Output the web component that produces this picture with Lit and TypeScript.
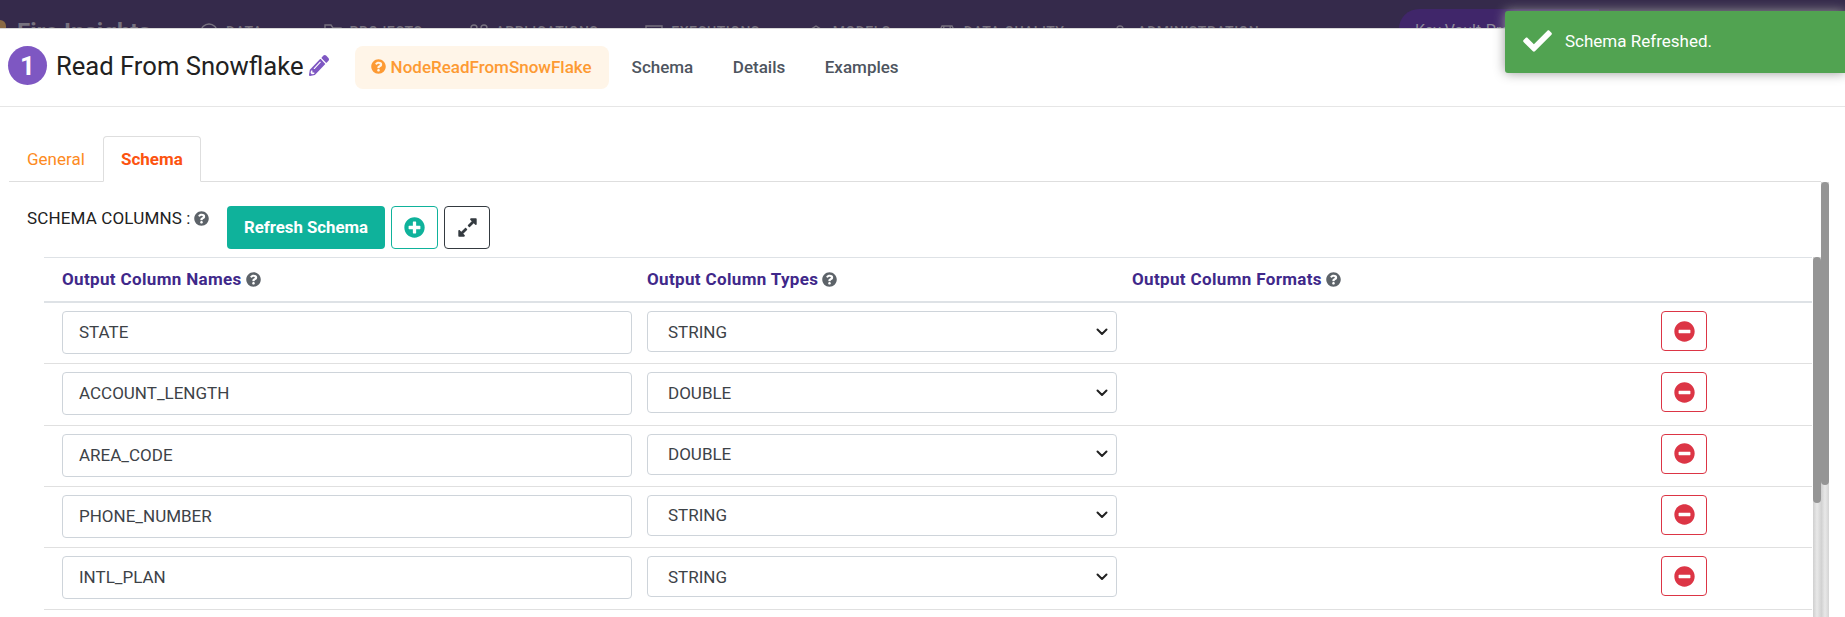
import { LitElement, html, css } from "lit";
import { customElement } from "lit/decorators.js";

const faQuestion = (cls: string) => html`<svg class=${cls} viewBox="0 0 512 512" fill="currentColor"><path fill-rule="evenodd" d="M504 256c0 137-111 248-248 248S8 393 8 256 119 8 256 8s248 111 248 248zM262.700 90c-54.500 0-89.300 23-116.500 63.800-3.500 5.300-2.400 12.400 2.700 16.300l34.700 26.300c5.200 3.900 12.600 3 16.700-2.100 17.900-22.700 30.100-35.800 57.300-35.800 20.400 0 45.700 13.100 45.700 32.900 0 15-12.400 22.700-32.500 34-23.500 13.200-54.600 29.600-54.600 70.700v6c0 6.600 5.400 12 12 12h56c6.600 0 12-5.400 12-12v-3.300c0-28.500 83.200-29.700 83.200-106.700C395.400 134 335.200 90 262.700 90zM256 338c-25.400 0-46 20.600-46 46s20.600 46 46 46 46-20.600 46-46-20.600-46-46-46z"/></svg>`;

const minusCircle = html`<svg class="ic-minus" viewBox="0 0 512 512" fill="currentColor"><path d="M256 8C119 8 8 119 8 256s111 248 248 248 248-111 248-248S393 8 256 8zM124 296c-6.600 0-12-5.400-12-12v-56c0-6.600 5.400-12 12-12h264c6.600 0 12 5.400 12 12v56c0 6.600-5.400 12-12 12H124z"/></svg>`;

const rows = [
  ["STATE", "STRING"],
  ["ACCOUNT_LENGTH", "DOUBLE"],
  ["AREA_CODE", "DOUBLE"],
  ["PHONE_NUMBER", "STRING"],
  ["INTL_PLAN", "STRING"],
];

const navIcon = (d: string) => html`<svg class="nav-ic" viewBox="0 0 18 18" fill="none" stroke="currentColor" stroke-width="1.4"><path d=${d}/></svg>`;

const navItems: [string, string][] = [
  ["DATA", "M1 9a8 8 0 1 0 16 0a8 8 0 1 0-16 0"],
  ["PROJECTS", "M1 16V2h6l2 3h8v11z"],
  ["APPLICATIONS", "M1 5a3 3 0 1 0 6 0a3 3 0 1 0-6 0M11 5a3 3 0 1 0 6 0a3 3 0 1 0-6 0M2 12h14v5H2z"],
  ["EXECUTIONS", "M1 3h16v12H1zM7 6l5 3-5 3z"],
  ["MODELS", "M9 3l8 5v8H1V8z"],
  ["DATA QUALITY", "M4 3h10l3 6H1zM6 3l-1 6M12 3l1 6M4 9v8M14 9v8"],
  ["ADMINISTRATION", "M6 6a3 3 0 1 0 6 0a3 3 0 1 0-6 0M3 17a6 6 0 0 1 12 0"],
];

@customElement("app-root")
export class AppRoot extends LitElement {
  static styles = css`
    :host { display: block; width: 1845px; height: 617px; overflow: hidden; position: relative; background: #fff; font-family: Roboto, "Liberation Sans", sans-serif; color: #212529; }
    .topbar { height: 28px; background: #352a4b; display: flex; align-items: flex-start; overflow: hidden; }
    .logo { width: 6px; height: 8px; margin-top: 20px; background: #8a6a45; border-radius: 0 8px 0 0; flex: none; }
    .brand { color: #77727f; font-size: 24px; line-height: 28px; font-weight: 700; margin: 18px 0 0 11px; width: 183px; flex: none; white-space: nowrap; }
    .topnav { display: flex; gap: 47px; flex: none; margin-top: 24px; color: #77727f; font-size: 14px; line-height: 16px; font-weight: 500; letter-spacing: .5px; }
    .topnav > div { display: flex; align-items: flex-start; gap: 8px; white-space: nowrap; }
    .topnav > div:first-child { margin-right: 14px; }
    .nav-ic { width: 18px; height: 18px; flex: none; margin-top: -1px; }
    .vault { margin: 9px 246px 0 auto; width: 200px; height: 40px; flex: none; border-radius: 20px 0 0 20px; background: #40266a; color: #8d8a9a; font-size: 16px; padding: 12px 0 0 16px; box-sizing: border-box; white-space: nowrap; }
    .sheet { background: #fff; border-top: 1px solid #d8d8d8; }
    .head { height: 77px; border-bottom: 1px solid #e6e6e6; display: flex; align-items: center; padding-left: 8px; }
    .num { width: 39px; height: 39px; border-radius: 50%; background: #7e57c2; color: #fff; font-size: 26px; font-weight: 700; display: flex; align-items: center; justify-content: center; margin: 0 9px 4px 0; flex: none; }
    .title { font-size: 25.6px; color: #212121; white-space: nowrap; margin-bottom: 3px; }
    .pencil { width: 20px; height: 21px; color: #7e57c2; margin: 0 0 4px 5px; flex: none; }
    .pill { margin-left: 26px; height: 43px; width: 254px; box-sizing: border-box; background: #fff5e8; border-radius: 8px; color: #fd9a33; font-size: 17px; font-weight: 500; display: flex; align-items: center; padding: 0 0 2px 16px; gap: 5px; white-space: nowrap; flex: none; }
    .ic-q-o { width: 15px; height: 15px; flex: none; }
    .links { display: flex; gap: 39.5px; margin: 0 0 2px 23px; }
    .hl { font-size: 17px; color: #4e5560; font-weight: 500; }
    .body { padding-left: 9px; }
    .tabs { display: flex; height: 75px; align-items: flex-end; border-bottom: 1px solid #dedede; width: 1812px; box-sizing: border-box; }
    .tab { display: flex; align-items: center; font-size: 17px; box-sizing: border-box; }
    .tab.g { color: #fd8a22; padding-left: 18px; width: 94px; height: 45px; }
    .tab.s { color: #fc5310; font-weight: 700; border: 1px solid #dedede; border-bottom-color: #fff; border-radius: 4px 4px 0 0; margin-bottom: -1px; height: 46px; width: 98px; padding-left: 17px; }
    .toolbar { display: flex; height: 75px; align-items: flex-start; padding-left: 18px; }
    .cap { font-size: 17px; line-height: 20px; letter-spacing: .15px; color: #212121; margin-top: 26px; display: flex; align-items: center; gap: 3px; width: 200px; flex: none; white-space: nowrap; }
    .ic-q { width: 15px; height: 15px; color: #5d6369; flex: none; }
    .refresh { margin-top: 24px; width: 158px; height: 43px; padding-bottom: 2px; box-sizing: border-box; background: #0fb29b; border-radius: 4px; color: #fff; font-size: 16.8px; font-weight: 700; display: flex; align-items: center; justify-content: center; white-space: nowrap; }
    .ibtn { margin: 24px 0 0 6px; height: 43px; box-sizing: border-box; border-radius: 4px; display: flex; align-items: center; justify-content: center; }
    .plus { width: 47px; border: 1px solid #0fb29b; color: #0fb29b; }
    .expand { width: 46px; border: 1px solid #343a40; color: #343a40; }
    .plus svg, .expand svg { width: 21px; height: 21px; }
    .table { margin-left: 35px; width: 1768px; }
    .row { display: grid; grid-template-columns: 603px 485px 1fr 46px; padding-right: 105px; box-sizing: border-box; }
    .row.hdr { height: 46px; align-items: center; padding-bottom: 1px; border-top: 1px solid #dee2e6; border-bottom: 2px solid #dee2e6; color: #40288a; font-size: 17px; font-weight: 700; letter-spacing: .35px; }
    .row.hdr .c { display: flex; align-items: center; gap: 4px; white-space: nowrap; }
    .row.hdr .c:first-child { padding-left: 18px; }
    .row.data { height: 61.33px; align-items: start; padding-top: 8px; border-bottom: 1px solid #e0e0e0; }
    .cell { padding-left: 18px; }
    .input, .select { box-sizing: border-box; border: 1px solid #ced4da; border-radius: 4px; background: #fff; display: flex; align-items: center; font-size: 17px; color: #3d4247; }
    .input { width: 570px; height: 43px; padding: 0 0 1px 16px; }
    .select { width: 470px; height: 41px; padding: 0 8px 0 20px; justify-content: space-between; }
    .chev { width: 12px; height: 8px; color: #222; }
    .del { width: 46px; height: 40px; box-sizing: border-box; border: 1px solid #dc3545; border-radius: 4px; color: #dc3545; display: flex; align-items: center; justify-content: center; }
    .ic-minus { width: 21px; height: 21px; }
    .toast { position: absolute; left: 1505px; top: 11px; width: 340px; height: 62px; padding-bottom: 2px; box-sizing: border-box; background: #51a351; border-radius: 3px 0 0 3px; box-shadow: 0 0 12px #999; color: #fff; display: flex; align-items: center; font-size: 17px; }
    .toast svg { width: 29px; height: 22px; margin: 0 13px 0 18px; flex: none; }
    .track { position: absolute; top: 182px; bottom: 0; width: 8px; background: linear-gradient(90deg, #cfcfcf, #e8e8e8 50%, #d4d4d4); }
    .track.outer { left: 1821px; }
    .track.inner { left: 1813px; top: 257px; }
    .thumb { background: #959595; border-radius: 4px; width: 8px; }
    .outer .thumb { height: 303px; }
    .inner .thumb { height: 246px; }
  `;

  render() {
    return html`
      <div class="topbar">
        <div class="logo"></div>
        <div class="brand">Fire Insights</div>
        <div class="topnav">${navItems.map(([n, d]) => html`<div>${navIcon(d)}<span>${n}</span></div>`)}</div>
        <div class="vault">Key Vault-Pro</div>
      </div>
      <div class="sheet">
        <div class="head">
          <div class="num">1</div>
          <div class="title">Read From Snowflake</div>
          <svg class="pencil" viewBox="0 0 512 512" fill="currentColor" preserveAspectRatio="none"><path d="M497.900 142.100l-46.100 46.100c-4.700 4.700-12.300 4.700-17 0l-111-111c-4.700-4.700-4.700-12.300 0-17l46.100-46.100c18.700-18.700 49.100-18.700 67.900 0l60.100 60.100c18.800 18.700 18.800 49.100 0 67.900zM284.200 99.800L21.600 362.400.4 483.900c-2.900 16.400 11.400 30.600 27.800 27.800l121.500-21.300 262.600-262.600c4.700-4.700 4.700-12.300 0-17l-111-111c-4.800-4.700-12.400-4.700-17.100 0zM124.100 339.900c-5.500-5.500-5.500-14.300 0-19.800l154-154c5.500-5.500 14.300-5.500 19.800 0s5.500 14.300 0 19.800l-154 154c-5.500 5.500-14.300 5.500-19.800 0zM88 424h48v36.300l-64.500 11.300-31.100-31.100L51.700 376H88v48z"/></svg>
          <div class="pill">${faQuestion("ic-q-o")}<span>NodeReadFromSnowFlake</span></div>
          <div class="links"><span class="hl">Schema</span><span class="hl">Details</span><span class="hl">Examples</span></div>
        </div>
        <div class="body">
          <div class="tabs">
            <div class="tab g">General</div>
            <div class="tab s">Schema</div>
          </div>
          <div class="toolbar">
            <div class="cap">SCHEMA COLUMNS : ${faQuestion("ic-q")}</div>
            <div class="refresh">Refresh Schema</div>
            <div class="ibtn plus"><svg viewBox="0 0 512 512" fill="currentColor"><path d="M256 8C119 8 8 119 8 256s111 248 248 248 248-111 248-248S393 8 256 8zm144 276c0 6.600-5.400 12-12 12h-92v92c0 6.600-5.400 12-12 12h-56c-6.600 0-12-5.400-12-12v-92h-92c-6.600 0-12-5.400-12-12v-56c0-6.600 5.400-12 12-12h92v-92c0-6.600 5.400-12 12-12h56c6.600 0 12 5.400 12 12v92h92c6.600 0 12 5.400 12 12v56z"/></svg></div>
            <div class="ibtn expand"><svg viewBox="0 0 448 512" fill="currentColor"><path d="M212.686 315.314L120 408l32.922 31.029c15.120 15.120 4.412 40.971-16.970 40.971h-112C10.697 480 0 469.255 0 456V344c0-21.382 25.803-32.090 40.922-16.971L72 360l92.686-92.686c6.248-6.248 16.379-6.248 22.627 0l25.373 25.373c6.249 6.248 6.249 16.378 0 22.627zm22.628-118.628L328 104l-32.922-31.029C279.958 57.851 290.666 32 312.048 32h112C437.303 32 448 42.745 448 56v112c0 21.382-25.803 32.090-40.922 16.971L376 152l-92.686 92.686c-6.248 6.248-16.379 6.248-22.627 0l-25.373-25.373c-6.249-6.248-6.249-16.378 0-22.627z"/></svg></div>
          </div>
          <div class="table">
            <div class="row hdr">
              <div class="c">Output Column Names ${faQuestion("ic-q")}</div>
              <div class="c">Output Column Types ${faQuestion("ic-q")}</div>
              <div class="c">Output Column Formats ${faQuestion("ic-q")}</div>
              <div></div>
            </div>
            ${rows.map(
              ([n, t]) => html`<div class="row data">
                <div class="cell"><div class="input">${n}</div></div>
                <div><div class="select"><span>${t}</span><svg class="chev" viewBox="0 0 12 8" fill="none" stroke="currentColor" stroke-width="2" stroke-linecap="round" stroke-linejoin="round"><path d="M1.500 1.500L6 6l4.500-4.500"/></svg></div></div>
                <div></div>
                <div class="del">${minusCircle}</div>
              </div>`
            )}
          </div>
        </div>
      </div>
      <div class="toast">
        <svg viewBox="0 60 512 392" fill="#fff"><path d="M173.898 439.404l-166.400-166.400c-9.997-9.997-9.997-26.206 0-36.204l36.203-36.204c9.997-9.998 26.207-9.998 36.204 0L192 312.690 432.095 72.596c9.997-9.997 26.207-9.997 36.204 0l36.203 36.204c9.997 9.997 9.997 26.206 0 36.204l-294.400 294.401c-9.998 9.997-26.207 9.997-36.204-.001z"/></svg>
        <span>Schema Refreshed.</span>
      </div>
      <div class="track outer"><div class="thumb"></div></div>
      <div class="track inner"><div class="thumb"></div></div>
    `;
  }
}
